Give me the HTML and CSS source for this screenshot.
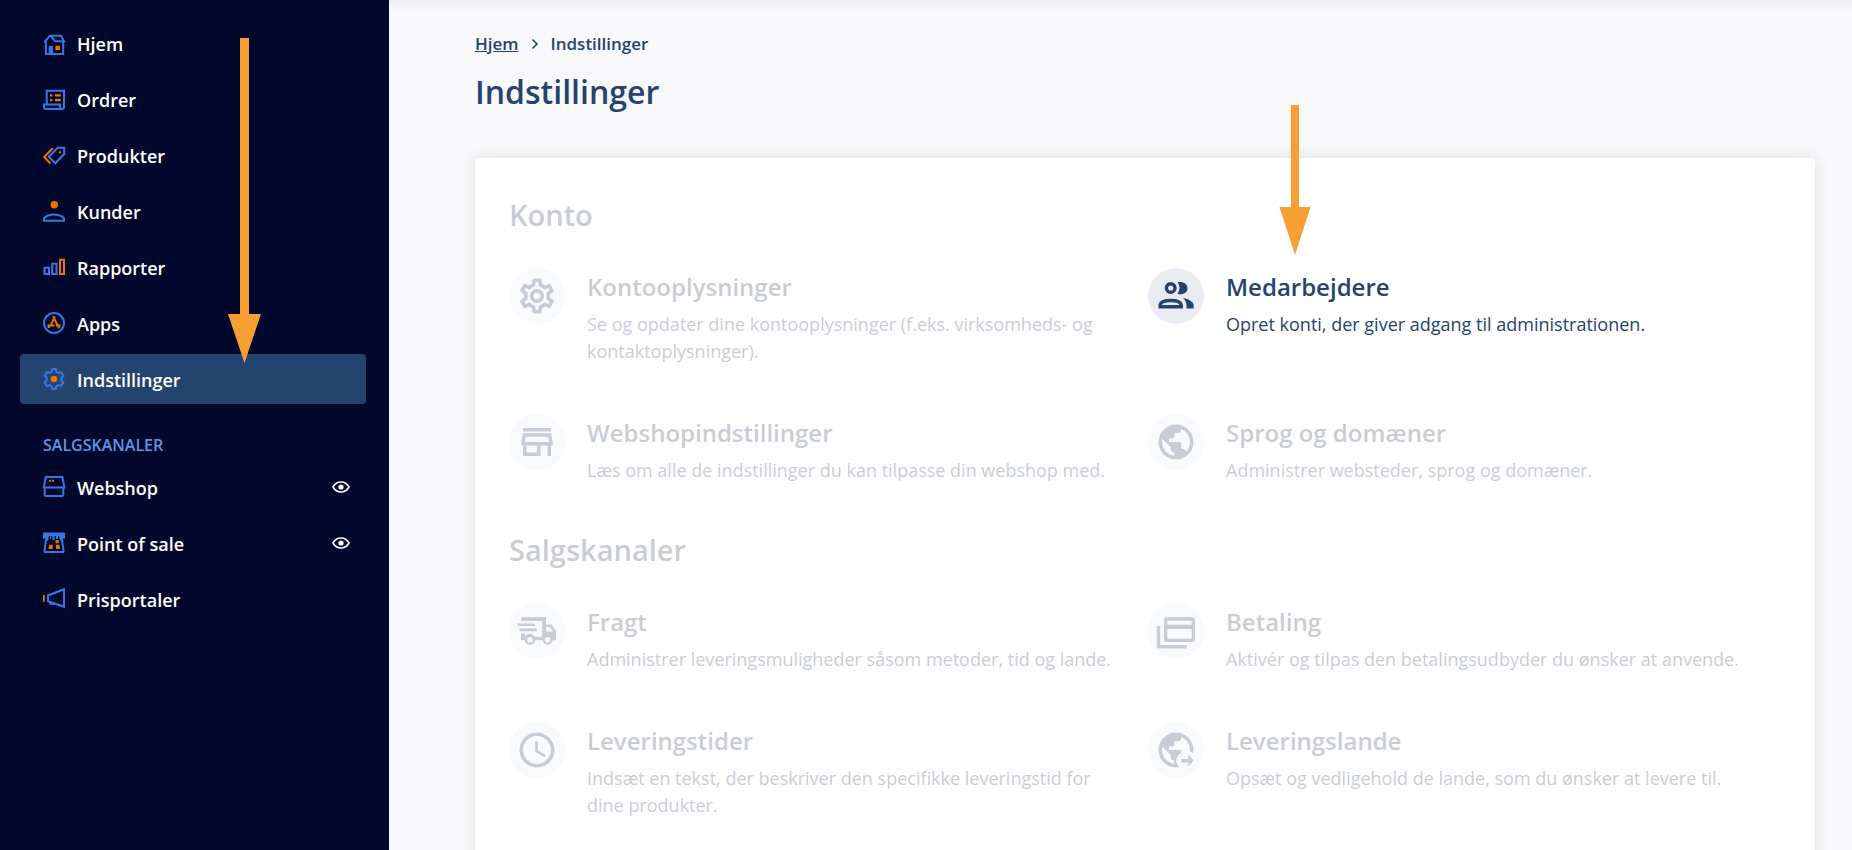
FILE: index.html
```html
<!DOCTYPE html>
<html lang="da">
<head>
<meta charset="utf-8">
<title>Indstillinger</title>
<link rel="stylesheet" href="styles.css">
</head>
<body>
<div class="app">
  <nav class="sidebar" aria-label="Hovedmenu">
    <ul class="menu">
      <li><a class="menu-link" href="#hjem">
        <svg class="menu-icon" viewBox="0 -2 22 22"><g class="line"><path d="M2.9 7.5V20h17.3V7.5M1.4 8.4 6.8 1.7H18l3 5.6H12.200L7.500 1.700"/></g><path class="blue" d="M5.700 12H10v8H5.700z"/><path class="orange" d="M12.300 11.700H17V16h-4.700z"/></svg>
        <span class="menu-text">Hjem</span></a></li>
      <li><a class="menu-link" href="#ordrer">
        <svg class="menu-icon" viewBox="0 -2 22 22"><g class="line"><path d="M3.700 13.500V.7H21V17a2 2 0 0 1-2 2H3a2 2 0 0 1-2-2v-2.600h16V17a2 2 0 0 0 2 2"/></g><path class="orange" d="M7 4.300h2.300v2.200H7zM12 4.300h5.800v2.200H12zM7 9h2.300v2.200H7zM12 9h5.800v2.200H12z"/></svg>
        <span class="menu-text">Ordrer</span></a></li>
      <li><a class="menu-link" href="#produkter">
        <svg class="menu-icon" viewBox="0 -2 22 22"><path class="line" d="M14.800 1.700h6.400V8l-8.900 9.300-6.600-6.600z"/><path class="line line-orange" d="M9.800 2.200 1.100 11l6.300 6.500"/><path class="orange" d="M16 5.300h2v2h-2z"/></svg>
        <span class="menu-text">Produkter</span></a></li>
      <li><a class="menu-link" href="#kunder">
        <svg class="menu-icon" viewBox="0 -2 22 22"><circle class="orange" cx="11.300" cy="2.700" r="3.700"/><path class="line" d="M1 18.700h20v-2.400c-5-5-15-5-20 0z"/></svg>
        <span class="menu-text">Kunder</span></a></li>
      <li><a class="menu-link" href="#rapporter">
        <svg class="menu-icon" viewBox="0 -1 22 22"><path class="line" d="M1.500 10.700H6V17H1.500zM9.200 6.700h4.300V17H9.200z"/><path class="line line-orange" d="M17 2.700h4V17h-4z"/></svg>
        <span class="menu-text">Rapporter</span></a></li>
      <li><a class="menu-link" href="#apps">
        <svg class="menu-icon" viewBox="0 0 22 22"><circle class="line" cx="11" cy="11" r="10"/><path class="line line-orange" d="m11.900 4.300-4.400 9.400M10 4.300l4.600 8.900M4.500 13.500h7M13 13.500h4.700M6.500 13.500l-1 2.500M14.500 13.200l2 3"/></svg>
        <span class="menu-text">Apps</span></a></li>
      <li><a class="menu-link menu-link-active" href="#indstillinger" aria-current="page">
        <svg class="menu-icon" viewBox="0 0 22 22"><path class="line" d="M9.200 1h3.600l.6 2.800 2 1.200 2.700-.9 2.300 3.500-2 1.900v3l2 1.900-2.300 3.500-2.700-.9-2 1.200-.6 2.800H9.200l-.6-2.800-2-1.200-2.700.9-2.300-3.500 2-1.900v-3l-2-1.900 2.300-3.500 2.700.9 2-1.200z"/><circle class="orange" cx="11" cy="11" r="3.300"/></svg>
        <span class="menu-text">Indstillinger</span></a></li>
    </ul>
    <h2 class="menu-heading">SALGSKANALER</h2>
    <ul class="menu">
      <li><a class="menu-link" href="#webshop">
        <svg class="menu-icon" viewBox="0 0 22 22"><path class="line" d="M1.700 11v7.500a1.500 1.500 0 0 0 1.500 1.500h15.600a1.500 1.500 0 0 0 1.500-1.500V11M.8 11.400 2.800 1h16.600l2 10.400z"/><path class="orange" d="M6 3.700h2v2H6zM9 3.700h2v2H9z"/></svg>
        <span class="menu-text">Webshop</span>
        <svg class="eye" viewBox="0 0 18 12"><path d="M1 6c3.800-6.700 12.200-6.700 16 0-3.800 6.700-12.200 6.700-16 0z"/><circle cx="9" cy="6" r="2.600"/></svg></a></li>
      <li><a class="menu-link" href="#pos">
        <svg class="menu-icon" viewBox="0 0 22 22"><path class="blue" fill-rule="evenodd" d="M1 .4h20a1 1 0 0 1 1 1V6.500h-2.200L21.600 19a1.700 1.700 0 0 1-1.700 2H2.100a1.700 1.700 0 0 1-1.700-2L2.200 6.500H0V1.400a1 1 0 0 1 1-1zM6 4 5.200 8.500 4 8.700 2.300 19h17.400L18 8.700l-1.200-.2L16 4h-1v3h-2V4h-1.500v4h-2V4H8v3H7V4z"/><path class="orange" d="M12.500 8h3.300v3.300h-3.300zM6.200 12.700h3.500V17H5.500zM13 12.700h3.500L17 17h-4z"/></svg>
        <span class="menu-text">Point of sale</span>
        <svg class="eye" viewBox="0 0 18 12"><path d="M1 6c3.800-6.700 12.200-6.700 16 0-3.800 6.700-12.200 6.700-16 0z"/><circle cx="9" cy="6" r="2.600"/></svg></a></li>
      <li><a class="menu-link" href="#prisportaler">
        <svg class="menu-icon" viewBox="0 0 22 22"><path class="line" d="M21 1.300v17.500L5 13.300V7.500z"/><path class="line" d="M7.500 14.500v1.200h5"/><path class="orange" d="M0 7h1.800v6.700H0z"/></svg>
        <span class="menu-text">Prisportaler</span></a></li>
    </ul>
  </nav>

  <main class="main">
    <nav class="breadcrumb" aria-label="Brødkrumme">
      <a class="breadcrumb-link" href="#hjem">Hjem</a>
      <svg class="chevron" viewBox="0 0 8 12"><path d="m1.500 1.500 4.500 4.500-4.500 4.500"/></svg>
      <span>Indstillinger</span>
    </nav>
    <h1 class="page-title">Indstillinger</h1>

    <div class="card">
      <section>
        <h2 class="section-title faded">Konto</h2>
        <div class="grid">
          <a class="item faded" href="#konto">
            <span class="badge"><svg class="badge-icon" viewBox="-4 -4 32 32"><path d="M19.430 12.980c.04-.32.07-.64.07-.98 0-.34-.03-.66-.07-.98l2.110-1.650c.19-.15.24-.42.12-.64l-2-3.460c-.09-.16-.26-.25-.44-.25-.06 0-.12.010-.17.030l-2.490 1c-.52-.4-1.080-.73-1.690-.98l-.38-2.650C14.460 2.180 14.250 2 14 2h-4c-.25 0-.46.18-.49.42l-.38 2.650c-.61.25-1.170.59-1.690.98l-2.490-1c-.06-.02-.12-.03-.18-.03-.17 0-.34.09-.43.25l-2 3.460c-.13.22-.07.49.12.64l2.110 1.650c-.04.32-.07.65-.07.98 0 .33.03.66.07.98l-2.110 1.650c-.19.15-.24.42-.12.64l2 3.460c.09.16.26.25.44.25.06 0 .12-.01.17-.03l2.490-1c.52.4 1.080.73 1.690.98l.38 2.650c.03.24.24.42.49.42h4c.25 0 .46-.18.49-.42l.38-2.650c.61-.25 1.170-.59 1.690-.98l2.490 1c.06.02.12.03.18.03.17 0 .34-.09.43-.25l2-3.460c.12-.22.07-.49-.12-.64l-2.110-1.650zm-1.980-1.710c.04.31.05.52.05.73 0 .21-.02.43-.05.73l-.14 1.130.89.7 1.080.84-.7 1.210-1.270-.51-1.040-.42-.9.68c-.43.32-.84.56-1.250.73l-1.060.43-.16 1.130-.2 1.350h-1.400l-.19-1.350-.16-1.130-1.060-.43c-.43-.18-.83-.41-1.230-.71l-.91-.7-1.060.43-1.270.51-.7-1.210 1.080-.84.89-.7-.14-1.130c-.03-.31-.05-.54-.05-.74s.02-.43.05-.73l.14-1.130-.89-.7-1.080-.84.7-1.210 1.270.51 1.040.42.9-.68c.43-.32.84-.56 1.250-.73l1.060-.43.16-1.130.2-1.350h1.390l.19 1.350.16 1.130 1.060.43c.43.18.83.41 1.230.71l.91.7 1.060-.43 1.270-.51.7 1.210-1.070.85-.89.7.14 1.130zM12 8c-2.210 0-4 1.790-4 4s1.790 4 4 4 4-1.790 4-4-1.790-4-4-4zm0 6c-1.100 0-2-.9-2-2s.9-2 2-2 2 .9 2 2-.9 2-2 2z"/></svg></span>
            <span class="item-body"><span class="item-title">Kontooplysninger</span><span class="item-text">Se og opdater dine kontooplysninger (f.eks. virksomheds- og kontaktoplysninger).</span></span>
          </a>
          <a class="item" href="#medarbejdere">
            <span class="badge"><svg class="badge-icon" viewBox="0 0 56 56"><circle class="outline" cx="22.700" cy="20" r="4.300"/><path d="M29.500 14.300c5-1.300 10 1.300 10 5.900s-5 7.200-10 5.500c2.600-3.400 2.600-8 0-11.400zM35 30c5.500 1 10.700 3.700 10.700 7.500v3H38.500v-3C38.500 34.500 37.200 32 35 30z"/><path class="outline" d="M12.200 38.700h21V37c-1-6-20-6-21 0z"/></svg></span>
            <span class="item-body"><span class="item-title">Medarbejdere</span><span class="item-text">Opret konti, der giver adgang til administrationen.</span></span>
          </a>
          <a class="item faded" href="#webshopindstillinger">
            <span class="badge"><svg class="badge-icon" viewBox="-4 -4 32 32"><path d="m18.360 9 .6 3H5.040l.6-3h12.720M20 4H4v2h16V4zm0 3H4l-1 5v2h1v6h10v-6h4v6h2v-6h1v-2l-1-5zM6 18v-4h6v4H6z"/></svg></span>
            <span class="item-body"><span class="item-title">Webshopindstillinger</span><span class="item-text">Læs om alle de indstillinger du kan tilpasse din webshop med.</span></span>
          </a>
          <a class="item faded" href="#sprog">
            <span class="badge"><svg class="badge-icon" viewBox="-4 -4 32 32"><path d="M12 2C6.480 2 2 6.480 2 12s4.480 10 10 10 10-4.480 10-10S17.520 2 12 2zm-1 17.930c-3.950-.49-7-3.850-7-7.930 0-.62.08-1.210.21-1.790L9 15v1c0 1.100.9 2 2 2v1.930zm6.900-2.540c-.26-.81-1-1.390-1.900-1.390h-1v-3c0-.55-.45-1-1-1H8v-2h2c.55 0 1-.45 1-1V7h2c1.100 0 2-.9 2-2v-.41c2.930 1.190 5 4.060 5 7.410 0 2.080-.8 3.970-2.100 5.390z"/></svg></span>
            <span class="item-body"><span class="item-title">Sprog og domæner</span><span class="item-text">Administrer websteder, sprog og domæner.</span></span>
          </a>
        </div>
      </section>
      <section>
        <h2 class="section-title faded">Salgskanaler</h2>
        <div class="grid">
          <a class="item faded" href="#fragt">
            <span class="badge"><svg class="badge-icon" viewBox="0 0 56 56"><path fill-rule="evenodd" d="M13 14.300h24v7.200h5.500L47 28v9.300h-3.300a5.300 5.300 0 0 1-10.400 0h-7a5.300 5.300 0 0 1-10.500 0H12v-6.800h4v2.700a5.300 5.300 0 0 1 9.300.6h8V18H12zM37 24v4.500h7.300L41 24zM21 34a2.800 2.800 0 1 0 0 5.600 2.800 2.800 0 0 0 0-5.600zM38.500 34a2.800 2.800 0 1 0 0 5.600 2.800 2.800 0 0 0 0-5.600zM8 20.400h17.500l1 2.700H9zM10 25.500h17.300l1 2.700H11z"/></svg></span>
            <span class="item-body"><span class="item-title">Fragt</span><span class="item-text">Administrer leveringsmuligheder såsom metoder, tid og lande.</span></span>
          </a>
          <a class="item faded" href="#betaling">
            <span class="badge"><svg class="badge-icon" viewBox="0 0 56 56"><path fill-rule="evenodd" d="M18.500 14.300h26a2.500 2.500 0 0 1 2.500 2.500v19.700a2.500 2.500 0 0 1-2.500 2.500h-26a2.500 2.500 0 0 1-2.500-2.500V16.800a2.500 2.500 0 0 1 2.500-2.500zM19.300 17.700v4h24.400v-4zM19.300 26v9.700h24.400V26zM8.700 23h3.500v19h26.500v3.500H11.200a2.500 2.500 0 0 1-2.500-2.500z"/></svg></span>
            <span class="item-body"><span class="item-title">Betaling</span><span class="item-text">Aktivér og tilpas den betalingsudbyder du ønsker at anvende.</span></span>
          </a>
          <a class="item faded" href="#leveringstider">
            <span class="badge"><svg class="badge-icon" viewBox="-4 -4 32 32"><path d="M11.990 2C6.470 2 2 6.480 2 12s4.470 10 9.990 10C17.520 22 22 17.520 22 12S17.520 2 11.990 2zM12 20c-4.420 0-8-3.580-8-8s3.580-8 8-8 8 3.580 8 8-3.580 8-8 8zm.5-13H11v6l5.250 3.150.75-1.230-4.500-2.670z"/></svg></span>
            <span class="item-body"><span class="item-title">Leveringstider</span><span class="item-text">Indsæt en tekst, der beskriver den specifikke leveringstid for dine produkter.</span></span>
          </a>
          <a class="item faded" href="#leveringslande">
            <span class="badge"><svg class="badge-icon" viewBox="-4 -4 32 32"><path d="M12 2C6.480 2 2 6.480 2 12s4.480 10 10 10c.5 0 .9 0 1.400-.1v-.8c-1.200-1.500-1.600-3-.9-4.800.4-1.100 2.500-2.300 2.500-3.300 0-.6-.4-1-1-1H8v-2h2c.55 0 1-.45 1-1V7h2c1.100 0 2-.9 2-2v-.41c2.930 1.190 5 4.060 5 7.410v.7l1.800.8c.1-.5.2-1 .2-1.500 0-5.520-4.480-10-10-10zm-1 17.930c-3.950-.49-7-3.850-7-7.930 0-.62.08-1.210.21-1.790L9 15v1c0 1.100.9 2 2 2v1.930zM15 17.200h4v-2.600l3.200 3.400-3.200 3.400v-2.200h-4z"/></svg></span>
            <span class="item-body"><span class="item-title">Leveringslande</span><span class="item-text">Opsæt og vedligehold de lande, som du ønsker at levere til.</span></span>
          </a>
        </div>
      </section>
    </div>
  </main>

  <svg class="arrow arrow-menu" viewBox="0 0 33 326"><path d="M12 0h9v276h12L16.500 325 0 276h12z"/></svg>
  <svg class="arrow arrow-card" viewBox="0 0 32 150"><path d="M12 0h8v102h11.500L16 150 .5 102H12z"/></svg>
</div>
</body>
</html>
```
FILE: styles.css
```css
* { box-sizing: border-box; }

body {
  margin: 0;
  background: #f9f9fb;
  color: #24446f;
  font-family: "Segoe UI", "Open Sans", "Noto Sans", sans-serif;
}

ul, h1, h2 { margin: 0; padding: 0; list-style: none; }
a { color: inherit; text-decoration: none; }

.app {
  position: relative;
  display: flex;
  height: 100vh;
  overflow: hidden;
}

.sidebar {
  flex: 0 0 389px;
  padding: 18px 23px 0 20px;
  background: #02082b;
}

.menu { display: grid; gap: 6px; }

.menu-link {
  display: flex;
  align-items: center;
  gap: 12px;
  height: 50px;
  padding: 0 16px 0 23px;
  border-radius: 4px;
  color: #fff;
  font-size: 18px;
  font-weight: 600;
}

.menu-link-active { background: #24446f; }
.menu-text { padding-top: 2px; }
.menu-icon { width: 22px; height: 22px; overflow: visible; }
.line { fill: none; stroke: #3478e5; stroke-width: 2; }
.line-orange { stroke: #f36f00; }
.blue { fill: #3478e5; }
.orange { fill: #f36f00; }

.eye {
  width: 18px;
  height: 12px;
  margin-left: auto;
  overflow: visible;
  fill: none;
  stroke: #fff;
  stroke-width: 1.6;
}
.eye circle { fill: #fff; stroke: none; }

.menu-heading {
  padding: 30px 23px 6px;
  color: #5c97e6;
  font-size: 16px;
  font-weight: 600;
  line-height: 22px;
}

.main {
  flex: 1;
  min-width: 0;
  padding: 30px 37px 0 86px;
  box-shadow: inset 0 14px 14px -14px rgba(0, 0, 0, 0.1);
}

.breadcrumb {
  display: flex;
  align-items: center;
  gap: 12px;
  font-size: 17px;
  font-weight: 600;
  line-height: 28px;
}
.breadcrumb-link { text-decoration: underline; }
.chevron { width: 8px; height: 12px; fill: none; stroke: #24446f; stroke-width: 1.6; }

.page-title {
  margin: 12px 0 44px;
  font-size: 32px;
  font-weight: 600;
  line-height: 44px;
}

.card {
  min-height: 800px;
  padding: 40px 28px 40px 34px;
  border-radius: 4px;
  background: #fff;
  box-shadow: 0 0 16px rgba(0, 0, 0, 0.12);
}

.section-title {
  margin-bottom: 36px;
  font-size: 29px;
  font-weight: 600;
  line-height: 34px;
}

.grid { display: grid; grid-template-columns: 1fr 1fr; }

.item {
  display: flex;
  gap: 22px;
  padding: 0 24px 49px 0;
}

.badge {
  flex: none;
  width: 56px;
  height: 56px;
  border-radius: 50%;
  background: #e9edf3;
}
.badge-icon { display: block; width: 56px; height: 56px; fill: #24446f; }
.outline { fill: none; stroke: #24446f; stroke-width: 3.5; }

.faded { color: #2b375b; opacity: 0.25; }
.faded .badge-icon { fill: #2b375b; }

.item-body { display: flex; flex-direction: column; gap: 8px; padding-top: 3px; }
.item-title { font-size: 24px; font-weight: 600; line-height: 32px; }
.item-text { font-size: 18px; line-height: 27px; }

.arrow { position: absolute; fill: #f89f34; }
.arrow-menu { left: 228px; top: 38px; width: 33px; height: 326px; }
.arrow-card { left: 1279px; top: 105px; width: 32px; height: 150px; }
```
